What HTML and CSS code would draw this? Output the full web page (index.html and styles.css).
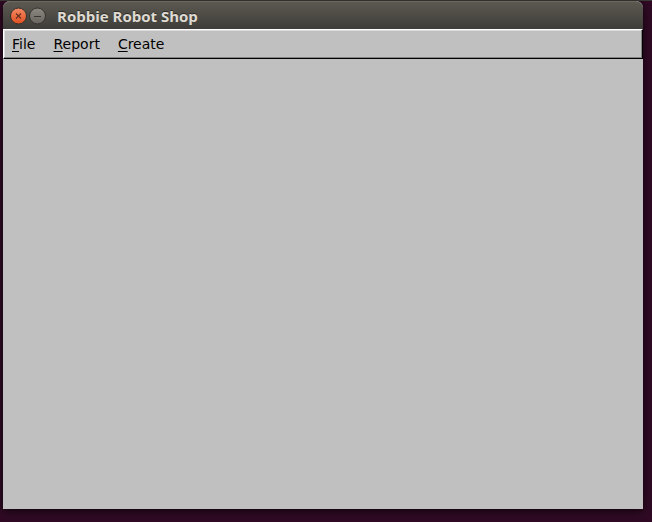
FILE: index.html
```html
<!DOCTYPE html>
<html lang="en">
<head>
<meta charset="utf-8">
<title>Robbie Robot Shop</title>
<link rel="stylesheet" href="styles.css">
</head>
<body>
<main class="window">
  <header class="titlebar">
    <button class="control" type="button" aria-label="Close">
      <svg viewBox="0 0 18 18" width="18" height="18" aria-hidden="true">
        <defs><linearGradient id="close-fill" x2="0" y2="1"><stop stop-color="#f58a65"/><stop offset="1" stop-color="#df4f20"/></linearGradient></defs>
        <circle cx="9.5" cy="9" r="8" fill="url(#close-fill)" stroke="#33302b"/>
        <path d="M7 6.5l5 5M12 6.5l-5 5" stroke="#62301f" stroke-width="1.1"/>
      </svg>
    </button>
    <button class="control" type="button" aria-label="Minimize">
      <svg viewBox="0 0 18 18" width="18" height="18" aria-hidden="true">
        <defs><linearGradient id="min-fill" x2="0" y2="1"><stop stop-color="#8b8980"/><stop offset="1" stop-color="#66645e"/></linearGradient></defs>
        <circle cx="9.5" cy="9" r="8" fill="url(#min-fill)" stroke="#33322e"/>
        <path d="M6 9.5h7" stroke="#36352f"/>
      </svg>
    </button>
    <h1 class="title">Robbie Robot Shop</h1>
  </header>
  <nav class="menubar">
    <button class="menu" type="button"><span class="key">F</span>ile</button>
    <button class="menu" type="button"><span class="key">R</span>eport</button>
    <button class="menu" type="button"><span class="key">C</span>reate</button>
  </nav>
  <section class="content"></section>
</main>
</body>
</html>
```
FILE: styles.css
```css
* {
  box-sizing: border-box;
}

body {
  display: flex;
  min-height: 100vh;
  margin: 0;
  padding: 1px 9px 13px 3px;
  background: linear-gradient(#3c3b37 1px, #300a24 1px);
}

.window {
  display: flex;
  flex: 1;
  flex-direction: column;
  border-radius: 7px 7px 0 0;
  background: #c0c0c0;
  box-shadow: 0 2px 8px rgba(0, 0, 0, 0.7);
}

.titlebar {
  display: flex;
  align-items: center;
  height: 28px;
  padding: 0 6px;
  gap: 1px;
  border-top: 1px solid #69675e;
  border-radius: 7px 7px 0 0;
  background: linear-gradient(#5b5950, #3e3d39);
}

.control {
  display: flex;
  padding: 0;
  border: 0;
  background: none;
}

.control svg {
  overflow: visible;
}

.title {
  margin: 0 0 0 10px;
  color: #dfdbd2;
  font: bold 15px/20px "Open Sans", "Noto Sans", sans-serif;
  text-shadow: 0 -1px 0 #2c2b28;
}

.menubar {
  display: flex;
  align-items: center;
  height: 30px;
  gap: 2px;
  border: 1px solid #000;
  border-top-color: #fff;
  border-left-color: #fff;
  box-shadow: inset -1px -1px #858585, inset 1px 1px #dcdcdc;
}

.menu {
  padding: 0 8px;
  border: 0;
  background: none;
  color: #000;
  font: 14px/20px "DejaVu Sans", sans-serif;
}

.key {
  text-decoration: underline;
  text-decoration-thickness: 1px;
  text-underline-offset: 2px;
}

.content {
  flex: 1;
}
```
